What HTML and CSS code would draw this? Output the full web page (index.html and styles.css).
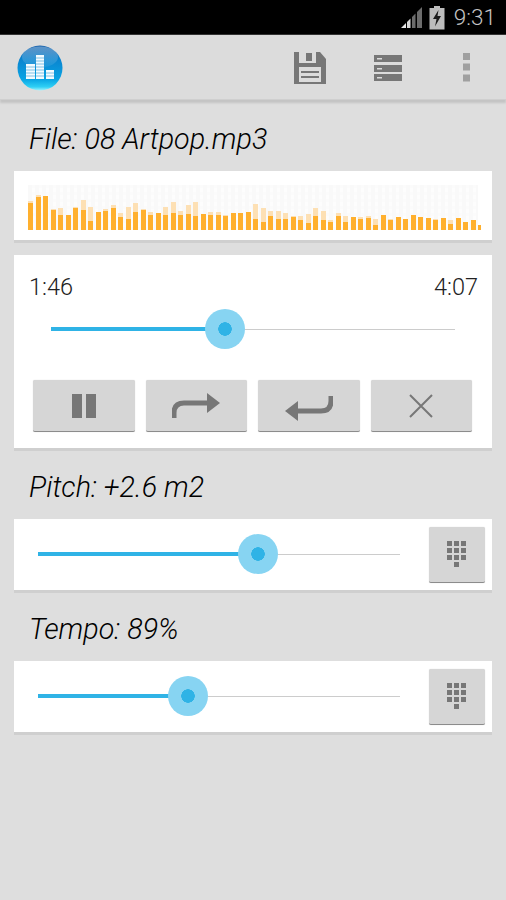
FILE: index.html
```html
<!DOCTYPE html>
<html lang="en">
<head>
  <meta charset="UTF-8" />
  <meta name="viewport" content="width=device-width, initial-scale=1.0"/>
  <title>Pitch Shifter</title>
  <link rel="stylesheet" href="styles.css">
</head>
<body>
  <!-- Status bar -->
  <div class="status-bar">
    <svg class="signal" width="21" height="23" viewBox="0 0 21 23">
      <path d="M0 22L5 17V22Z" fill="#e8e8e8"/>
      <path d="M6 16L9.500 12.500V22H6Z" fill="#d8d8d8"/>
      <path d="M11 11L14.500 7.500V22H11Z" fill="#6c6c6c"/>
      <path d="M16 6L21 1V22H16Z" fill="#6c6c6c"/>
    </svg>
    <svg class="battery" width="16" height="24" viewBox="0 0 16 24">
      <path d="M5 0H11V2H15.500V23.500H0.500V2H5Z" fill="#bdbdbd"/>
      <path d="M9.500 4L4 13H7.500L6 20.500L12 10H8.500Z" fill="#1c1c1c"/>
    </svg>
    <span class="clock">9:31</span>
  </div>

  <!-- Action bar -->
  <div class="action-bar">
    <svg class="logo" width="46" height="46" viewBox="0 0 46 46">
      <defs>
        <linearGradient id="ball" x1="0" y1="0" x2="0" y2="1">
          <stop offset="0" stop-color="#1a62ab"/>
          <stop offset=".3" stop-color="#0b84cf"/>
          <stop offset=".75" stop-color="#08a4e4"/>
          <stop offset=".92" stop-color="#2fd0f5"/>
          <stop offset="1" stop-color="#a4f3fd"/>
        </linearGradient>
        <linearGradient id="gloss" x1="0" y1="0" x2="0" y2="1">
          <stop offset="0" stop-color="#fff" stop-opacity=".3"/>
          <stop offset="1" stop-color="#fff" stop-opacity=".06"/>
        </linearGradient>
      </defs>
      <circle cx="23" cy="23" r="22.500" fill="url(#ball)"/>
      <ellipse cx="23" cy="12" rx="18" ry="10.500" fill="url(#gloss)"/>
      <path d="M9 19H18V34H9ZM19 10H27V34H19ZM29 25H37V34H29Z" fill="#f2fbff"/>
      <path d="M9 22H18M9 25H18M9 28H18M9 31H18M19 13H27M19 16H27M19 19H27M19 22H27M19 25H27M19 28H27M19 31H27M29 28H37M29 31H37" stroke="#62b4de" stroke-width=".8"/>
    </svg>
    <div class="actions">
      <svg class="save-icon" width="32" height="32" viewBox="0 0 32 32">
        <path d="M0 0H26L32 7V32H0Z" fill="#777"/>
        <path d="M5 0H22V11H5Z" fill="#dcdcdc"/>
        <path d="M12 1H18V9H12Z" fill="#777"/>
        <path d="M5 15H27V30H5Z" fill="#dcdcdc"/>
        <path d="M7 20H25M7 25H25" stroke="#777" stroke-width="2"/>
      </svg>
      <svg class="list-icon" width="28" height="26" viewBox="0 0 28 26">
        <path d="M0 0H28V7H0ZM0 10H28V17H0ZM0 19H28V26H0Z" fill="#777"/>
        <path d="M3 3H8V4.500H3ZM3 13H8V14.500H3ZM3 22H8V23.500H3Z" fill="#dcdcdc"/>
      </svg>
      <svg class="more-icon" width="8" height="29" viewBox="0 0 8 29">
        <path d="M0 0H7V7H0ZM0 10.500H7V17.500H0ZM0 21.500H7V28.500H0Z" fill="#a0a0a0"/>
      </svg>
    </div>
  </div>

  <div class="content">
    <div class="label">File: 08 Artpop.mp3</div>

    <!-- Waveform -->
    <div class="card wave-card">
      <div class="wave">
        <i style="height:29px"><b style="height:27px"></b></i>
        <i style="height:35px"><b style="height:33px"></b></i>
        <i style="height:34px"><b style="height:34px"></b></i>
        <i style="height:21px"><b style="height:20px"></b></i>
        <i style="height:22px"><b style="height:15px"></b></i>
        <i style="height:15px"><b style="height:15px"></b></i>
        <i style="height:23px"><b style="height:22px"></b></i>
        <i style="height:30px"><b style="height:20px"></b></i>
        <i style="height:23px"><b style="height:9px"></b></i>
        <i style="height:18px"><b style="height:18px"></b></i>
        <i style="height:21px"><b style="height:19px"></b></i>
        <i style="height:25px"><b style="height:22px"></b></i>
        <i style="height:17px"><b style="height:13px"></b></i>
        <i style="height:23px"><b style="height:11px"></b></i>
        <i style="height:27px"><b style="height:18px"></b></i>
        <i style="height:21px"><b style="height:20px"></b></i>
        <i style="height:18px"><b style="height:15px"></b></i>
        <i style="height:17px"><b style="height:17px"></b></i>
        <i style="height:23px"><b style="height:15px"></b></i>
        <i style="height:28px"><b style="height:17px"></b></i>
        <i style="height:19px"><b style="height:15px"></b></i>
        <i style="height:25px"><b style="height:16px"></b></i>
        <i style="height:28px"><b style="height:14px"></b></i>
        <i style="height:16px"><b style="height:16px"></b></i>
        <i style="height:18px"><b style="height:15px"></b></i>
        <i style="height:18px"><b style="height:15px"></b></i>
        <i style="height:15px"><b style="height:14px"></b></i>
        <i style="height:17px"><b style="height:17px"></b></i>
        <i style="height:17px"><b style="height:17px"></b></i>
        <i style="height:18px"><b style="height:18px"></b></i>
        <i style="height:26px"><b style="height:11px"></b></i>
        <i style="height:22px"><b style="height:8px"></b></i>
        <i style="height:19px"><b style="height:14px"></b></i>
        <i style="height:19px"><b style="height:11px"></b></i>
        <i style="height:17px"><b style="height:11px"></b></i>
        <i style="height:14px"><b style="height:13px"></b></i>
        <i style="height:14px"><b style="height:10px"></b></i>
        <i style="height:16px"><b style="height:7px"></b></i>
        <i style="height:22px"><b style="height:14px"></b></i>
        <i style="height:19px"><b style="height:10px"></b></i>
        <i style="height:10px"><b style="height:8px"></b></i>
        <i style="height:17px"><b style="height:14px"></b></i>
        <i style="height:14px"><b style="height:8px"></b></i>
        <i style="height:13px"><b style="height:13px"></b></i>
        <i style="height:13px"><b style="height:11px"></b></i>
        <i style="height:14px"><b style="height:12px"></b></i>
        <i style="height:11px"><b style="height:5px"></b></i>
        <i style="height:15px"><b style="height:15px"></b></i>
        <i style="height:11px"><b style="height:10px"></b></i>
        <i style="height:13px"><b style="height:13px"></b></i>
        <i style="height:11px"><b style="height:11px"></b></i>
        <i style="height:15px"><b style="height:15px"></b></i>
        <i style="height:13px"><b style="height:13px"></b></i>
        <i style="height:12px"><b style="height:12px"></b></i>
        <i style="height:11px"><b style="height:10px"></b></i>
        <i style="height:12px"><b style="height:12px"></b></i>
        <i style="height:10px"><b style="height:6px"></b></i>
        <i style="height:12px"><b style="height:12px"></b></i>
        <i style="height:8px"><b style="height:8px"></b></i>
        <i style="height:10px"><b style="height:10px"></b></i>
        <i class="last" style="height:5px"><b style="height:5px"></b></i>
      </div>
    </div>

    <!-- Player -->
    <div class="card player">
      <div class="times">
        <span>1:46</span>
        <span>4:07</span>
      </div>
      <div class="slider player-slider">
        <div class="fill" style="width:174px"></div>
        <div class="thumb" style="left:174px"></div>
      </div>
      <div class="buttons">
        <button class="button" type="button">
          <svg width="24" height="24" viewBox="0 0 24 24"><path d="M0 0H10V24H0ZM14 0H24V24H14Z" fill="#777"/></svg>
        </button>
        <button class="button" type="button">
          <svg width="48" height="26" viewBox="0 0 48 26"><path d="M2 25V20C2 13 6 10 12 10H36" fill="none" stroke="#777" stroke-width="5"/><path d="M35 0L48 10L35 20Z" fill="#777"/></svg>
        </button>
        <button class="button" type="button">
          <svg class="return-icon" width="48" height="26" viewBox="0 0 48 26"><path d="M46 1V6C46 13 42 16 36 16H12" fill="none" stroke="#777" stroke-width="5"/><path d="M13 6L0 16L13 26Z" fill="#777"/></svg>
        </button>
        <button class="button" type="button">
          <svg width="24" height="24" viewBox="0 0 24 24"><path d="M1 1L23 23M23 1L1 23" fill="none" stroke="#777" stroke-width="2"/></svg>
        </button>
      </div>
    </div>

    <div class="label">Pitch: +2.6 m2</div>
    <div class="card control">
      <div class="slider control-slider">
        <div class="fill" style="width:220px"></div>
        <div class="thumb" style="left:220px"></div>
      </div>
      <button class="button keypad" type="button">
        <svg width="22" height="26" viewBox="0 0 22 26"><path d="M1 0H6V5H1ZM8 0H13V5H8ZM15 0H20V5H15ZM1 7H6V12H1ZM8 7H13V12H8ZM15 7H20V12H15ZM1 14H6V19H1ZM8 14H13V19H8ZM15 14H20V19H15ZM8 21H13V26H8Z" fill="#777"/></svg>
      </button>
    </div>

    <div class="label">Tempo: 89%</div>
    <div class="card control">
      <div class="slider control-slider">
        <div class="fill" style="width:150px"></div>
        <div class="thumb" style="left:150px"></div>
      </div>
      <button class="button keypad" type="button">
        <svg width="22" height="26" viewBox="0 0 22 26"><path d="M1 0H6V5H1ZM8 0H13V5H8ZM15 0H20V5H15ZM1 7H6V12H1ZM8 7H13V12H8ZM15 7H20V12H15ZM1 14H6V19H1ZM8 14H13V19H8ZM15 14H20V19H15ZM8 21H13V26H8Z" fill="#777"/></svg>
      </button>
    </div>
  </div>
</body>
</html>
```

FILE: styles.css
```css
body {
  margin: 0;
  height: 900px;
  overflow: hidden;
  font-family: Roboto, "Liberation Sans", sans-serif;
  background-color: #dedede;
  color: #000;
}
.status-bar {
  height: 35px;
  background: #000;
  border-bottom: 1px solid #333;
  box-sizing: border-box;
  display: flex;
  align-items: center;
  justify-content: flex-end;
  padding-right: 10px;
}
.signal {
  margin-right: 7px;
  margin-top: 1px;
}
.battery {
  margin-right: 9px;
  margin-top: 1px;
}
.clock {
  font-size: 22.500px;
  font-weight: 300;
  color: #c4c4c4;
}
.action-bar {
  height: 65px;
  background: #dcdcdc;
  border-bottom: 1px solid #cfcfcf;
  box-shadow: 0 3px 2px #c4c4c4;
  box-sizing: border-box;
  display: flex;
  align-items: center;
  position: relative;
  padding-left: 17px;
}
.logo {
  margin-top: 1px;
}
.actions {
  margin-left: auto;
  display: flex;
  align-items: center;
  padding-right: 35px;
}
.save-icon {
  margin-top: 2px;
}
.list-icon {
  margin: 1px 61px 0 48px;
}
.label {
  height: 64px;
  padding: 7px 0 0 15px;
  display: flex;
  align-items: center;
  font-size: 28.700px;
  font-weight: 300;
  font-style: italic;
}
.content {
  padding: 0 14px;
}
.card {
  background: #fff;
  box-shadow: 0 3px 0 #cfcfcf;
}
.wave-card {
  height: 69px;
  padding: 14px 14px 10px;
  box-sizing: border-box;
  margin-bottom: 15px;
}
.wave {
  height: 45px;
  display: flex;
  align-items: flex-end;
  gap: 2.500px;
  background-color: #fdfdfd;
  background-image:
    repeating-linear-gradient(90deg, #f9f9f9 0 4px, transparent 4px 7px),
    repeating-linear-gradient(0deg, #fbfbfb 0 3px, transparent 3px 7px);
}
.wave i {
  flex: none;
  width: 5px;
  background: #fde0b4;
  display: flex;
  align-items: flex-end;
}
.wave b {
  display: block;
  width: 100%;
  background: #ffb02e;
}
.wave .last {
  width: 3px;
}
.player {
  height: 193px;
  padding: 19px 14px 0;
  box-sizing: border-box;
}
.times {
  display: flex;
  justify-content: space-between;
  padding: 0 0 0 1px;
  font-size: 23.500px;
  font-weight: 300;
  line-height: 26px;
  color: #222;
}
.slider {
  height: 1px;
  background: #cccccc;
  position: relative;
}
.fill {
  position: absolute;
  left: 0;
  top: -2px;
  height: 4px;
  background: #2fb3e6;
}
.thumb {
  position: absolute;
  top: 0;
  width: 40px;
  height: 40px;
  margin: -20px 0 0 -20px;
  border-radius: 50%;
  background: radial-gradient(circle, #2fb3e6 6.500px, #87d4f2 7px);
}
.player-slider {
  margin: 29px 23px 0 23px;
}
.buttons {
  margin: 50px 6px 0 5px;
  display: flex;
  gap: 11px;
}
.button {
  flex: 1;
  height: 52px;
  padding: 0;
  background: #d6d6d6;
  border: none;
  border-bottom: 1px solid #8c8c8c;
  border-radius: 2px;
  box-shadow: 0 0 1px #c8c8c8;
  display: flex;
  align-items: center;
  justify-content: center;
  cursor: pointer;
}
.return-icon {
  margin-top: 4px;
}
.control {
  height: 71px;
  display: flex;
  align-items: center;
  padding: 0 7px 0 24px;
  box-sizing: border-box;
}
.control-slider {
  width: 362px;
}
.keypad {
  flex: none;
  width: 56px;
  height: 56px;
  margin-left: auto;
}
```
